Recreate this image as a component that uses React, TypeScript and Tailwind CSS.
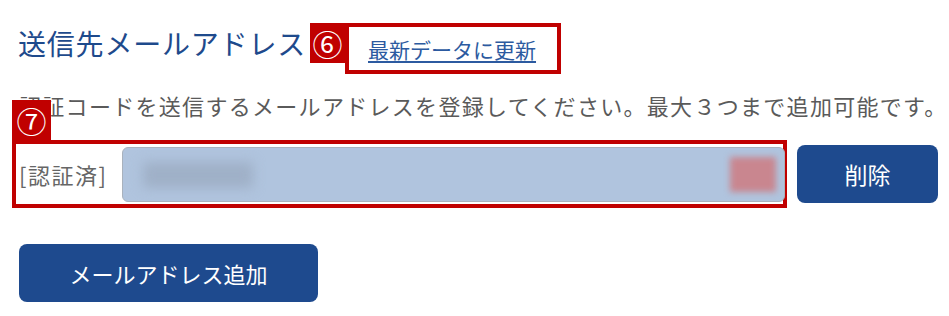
import React from "react";

const font = { fontFamily: '"Noto Sans CJK JP", "Noto Sans", sans-serif' };

export default function App() {
  return (
    <div className="w-[949px] h-[316px] bg-white relative overflow-hidden" style={font}>
      <div className="flex items-start pt-[23px] pl-[18px]">
        <div className="text-[28px] leading-[40px] text-[#1e4a8c] tracking-[0.8px]">送信先メールアドレス</div>
        <div className="w-[35px] h-[40px] bg-[#c00000] text-white text-[30px] leading-[40px] flex items-center justify-center ml-[4px]">⑥</div>
        <div className="w-[216px] h-[51px] border-4 border-[#c00000] flex items-center justify-center pr-[2px]">
          <a className="text-[21px] leading-[28px] text-[#2c5aa0] underline underline-offset-[3px]">最新データに更新</a>
        </div>
      </div>
      <div className="pl-[19px] mt-[15px] text-[22px] leading-[32px] text-[#5a5a5a] tracking-[1.3px] whitespace-nowrap">
        認証コードを送信するメールアドレスを登録してください。最大３つまで追加可能です。
      </div>
      <div className="flex items-center pl-[12px] mt-[19px]">
        <div className="relative w-[775px] h-[68px] border-4 border-[#c00000] flex items-center pl-[3px] pr-0">
          <div className="absolute left-[-4px] top-[-44px] w-[39px] h-[40px] bg-[#c00000] text-white text-[30px] leading-[40px] flex items-center justify-center">⑦</div>
          <span className="text-[22px] text-[#666] w-[103px] shrink-0 tracking-[1.5px]">[認証済]</span>
          <div className="relative flex-1 h-[55px] rounded-[6px] bg-[#b0c4de] border border-[#a9b2bd] overflow-hidden mr-[-2px]">
            <div className="absolute left-[20px] top-[14px] w-[110px] h-[26px] bg-[#9fb0c7] blur-[6px]" />
            <div className="absolute right-[8px] top-[9px] w-[46px] h-[35px] bg-[#c9868f] blur-[3px]" />
          </div>
        </div>
        <button className="ml-[10px] w-[141px] h-[58px] rounded-[8px] bg-[#1e4a8e] text-white text-[23px]">削除</button>
      </div>
      <button className="ml-[19px] mt-[36px] w-[299px] h-[58px] rounded-[8px] bg-[#1e4a8e] text-white text-[22px]">メールアドレス追加</button>
    </div>
  );
}
